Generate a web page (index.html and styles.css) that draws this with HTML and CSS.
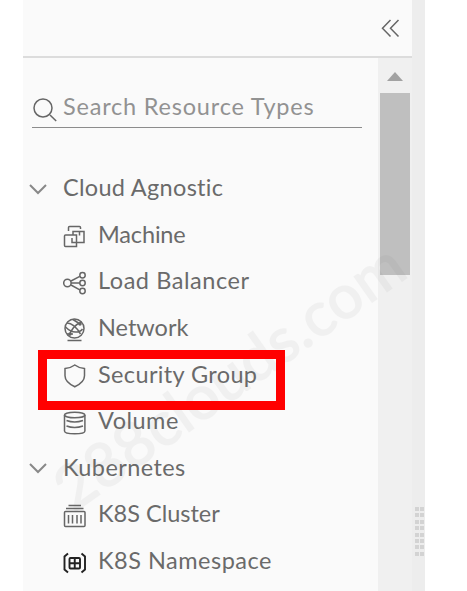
FILE: index.html
```html
<!DOCTYPE html>
<html lang="en">
<head>
<meta charset="utf-8">
<title>Resource Types</title>
<link rel="stylesheet" href="styles.css">
</head>
<body>
<div class="app">
  <aside class="panel">
    <header class="panel-header">
      <svg class="collapse" width="20" height="20" viewBox="0 0 20 20"><path d="M9.5 1 1.5 9.3 9.5 17.5M17.5 1 9.5 9.3 17.5 17.5"/></svg>
    </header>
    <div class="panel-body">
      <div class="content">
        <div class="search">
          <svg class="search-icon" width="26" height="26" viewBox="0 0 26 26"><circle cx="11" cy="11" r="9"/><path d="m18 18 6.2 6"/></svg>
          <span class="placeholder">Search Resource Types</span>
        </div>
        <ul class="tree">
          <li class="group"><svg class="chevron" width="18" height="11" viewBox="0 0 18 11"><path d="m1 1 8 8 8-8"/></svg><span class="t-cloud">Cloud Agnostic</span></li>
          <li class="item"><svg class="icon" viewBox="0 0 24 24"><path d="M5.500 7V3.500Q5.500 2.500 6.500 2.500H16.500Q17.500 2.500 17.500 3.500V5M2.500 11H13.500V22.500H2.500Q1.500 22.500 1.500 21.500V12Q1.500 11 2.500 11M13.500 18.500H21V7.500H10V11M9 14V18.500H13.500M16.500 7.500V11.500"/></svg><span class="t-machine">Machine</span></li>
          <li class="item"><svg class="icon" viewBox="0 0 24 24"><circle cx="4.400" cy="12" r="3.700"/><circle cx="19.500" cy="4.300" r="2.700"/><circle cx="19.500" cy="12" r="2.700"/><circle cx="19.500" cy="20" r="2.700"/><path d="m8 10 8.800-4.600M8 12h8.800M8 14l8.800 4.800"/></svg><span class="t-balancer">Load Balancer</span></li>
          <li class="item"><svg class="icon" viewBox="0 0 24 24"><circle cx="11.500" cy="10.500" r="9.500"/><path d="M4 5q7 0 13.500 11M18.500 4Q9 8 6.500 17.500M10 1.500l7 4.500M2.500 9q5 5 10 5t7-3M4 16h6M4.500 22.500h14"/><circle class="dot" cx="7" cy="16" r="1"/><circle class="dot" cx="17" cy="6" r="1"/></svg><span class="t-network">Network</span></li>
          <li class="item"><svg class="icon" viewBox="0 0 24 24"><path d="M11.800 1q4 3 9.700 3.600v7.200c0 5-4.400 8.500-9.700 11-5.300-2.500-9.800-6-9.800-11V4.600Q7.800 4 11.800 1Z"/></svg><span class="t-security">Security Group</span></li>
          <li class="item"><svg class="icon" viewBox="0 0 24 24"><ellipse cx="11.700" cy="4" rx="10.200" ry="2.800"/><path d="M1.500 4v16c0 3.800 20.400 3.800 20.400 0V4M3.500 9.500q8 3 16.500 0M3.500 15q8 3 16.500 0"/></svg><span class="t-volume">Volume</span></li>
          <li class="group"><svg class="chevron" width="18" height="11" viewBox="0 0 18 11"><path d="m1 1 8 8 8-8"/></svg><span class="t-kube">Kubernetes</span></li>
          <li class="item"><svg class="icon" viewBox="0 0 24 24"><path d="M5.500 1.500h12.500M3 4.500h17.500"/><rect x="1.500" y="7.500" width="20.500" height="15" rx="1"/><path d="M5.500 11v8.500M9.500 11v8.500M14 11v8.500M18 11v8.500"/></svg><span class="t-cluster">K8S Cluster</span></li>
          <li class="item"><svg class="icon dark" viewBox="0 0 24 24"><path d="m5 2.500-3.500 3v13l3.500 3M18.500 2.500l3.500 3v13l-3.500 3"/><rect x="6.500" y="7" width="10.500" height="10.500" rx="1"/><path d="M11.750 7V17.500M6.500 12.200h10.500"/></svg><span class="t-namespace">K8S Namespace</span></li>
        </ul>
      </div>
      <div class="scrollbar">
        <div class="arrow"></div>
        <div class="thumb"></div>
      </div>
    </div>
  </aside>
  <div class="resizer">
    <div class="grip"><i></i><i></i><i></i><i></i><i></i><i></i><i></i><i></i><i></i><i></i><i></i><i></i><i></i><i></i><i></i><i></i></div>
  </div>
  <div class="watermark">288clouds.com</div>
  <div class="highlight"></div>
</div>
</body>
</html>
```
FILE: styles.css
```css
* { box-sizing: border-box; }
body { margin: 0; background: #fff; font-family: Lato, "Liberation Sans", sans-serif; font-variant-ligatures: none; color: #6a6a6a; }
svg { display: block; flex: none; fill: none; stroke: #666; stroke-width: 1.5; }
.app { position: relative; display: flex; width: 467px; height: 591px; padding-left: 23px; overflow: hidden; }
.panel { display: flex; flex-direction: column; width: 389px; background: #fafafa; }
.panel-header { display: flex; justify-content: flex-end; height: 58px; padding: 19px 11px 0 0; border-bottom: 2px solid #dcdcdc; }
.panel-body { display: flex; flex: 1; }
.content { flex: 1; padding: 28px 16px 0 7px; }
.search { display: flex; width: 330px; height: 42px; margin-left: 2px; border-bottom: 1px solid #8c8c8c; font-size: 23.5px; line-height: 40px; color: #929292; }
.search-icon { margin: 11px 5px 0 0; }
.placeholder { letter-spacing: 0.800px; white-space: nowrap; }
.tree { margin: 36px 0 0 -1px; padding: 0; list-style: none; font-size: 23.5px; }
.group, .item { display: flex; align-items: center; height: 46.600px; white-space: nowrap; }
.group { gap: 16px; }
.item { padding-left: 34px; gap: 11px; }
.t-cloud { letter-spacing: 0.300px; }
.t-machine { letter-spacing: -0.150px; }
.t-balancer { letter-spacing: 0.550px; }
.t-security { letter-spacing: 0.370px; }
.t-volume { letter-spacing: 0.500px; }
.t-kube { letter-spacing: 0.400px; }
.t-namespace { letter-spacing: 0.500px; }
.chevron { stroke: #888; stroke-width: 2; margin-top: 4px; }
.icon { width: 24px; height: 24px; margin-top: 5px; }
.dark { stroke: #222; stroke-width: 1.900; }
.dot { fill: #666; }
.scrollbar { display: flex; flex-direction: column; align-items: center; width: 35px; background: #f0f0f0; }
.arrow { width: 16px; height: 9px; margin-top: 14px; background: #a2a2a2; clip-path: polygon(50% 0, 100% 100%, 0 100%); }
.thumb { width: 30px; height: 182px; margin-top: 12px; background: #bfbfbf; }
.resizer { width: 13px; padding: 507px 0 0 3px; background: #ededed; }
.grip { display: grid; grid-template-columns: 4px 4px; grid-auto-rows: 4px; gap: 2.400px 1px; }
.grip i { background: #d3d3d3; }
.watermark { position: absolute; left: 73px; top: 460px; font-size: 61px; line-height: 60px; letter-spacing: 0.400px; white-space: nowrap; color: #646464; -webkit-text-stroke: 1.500px #646464; opacity: 0.060; transform: rotate(-35.200deg); transform-origin: 0 52px; }
.highlight { position: absolute; left: 38px; top: 350px; width: 247px; height: 60px; border: 9px solid #f00; }
```
